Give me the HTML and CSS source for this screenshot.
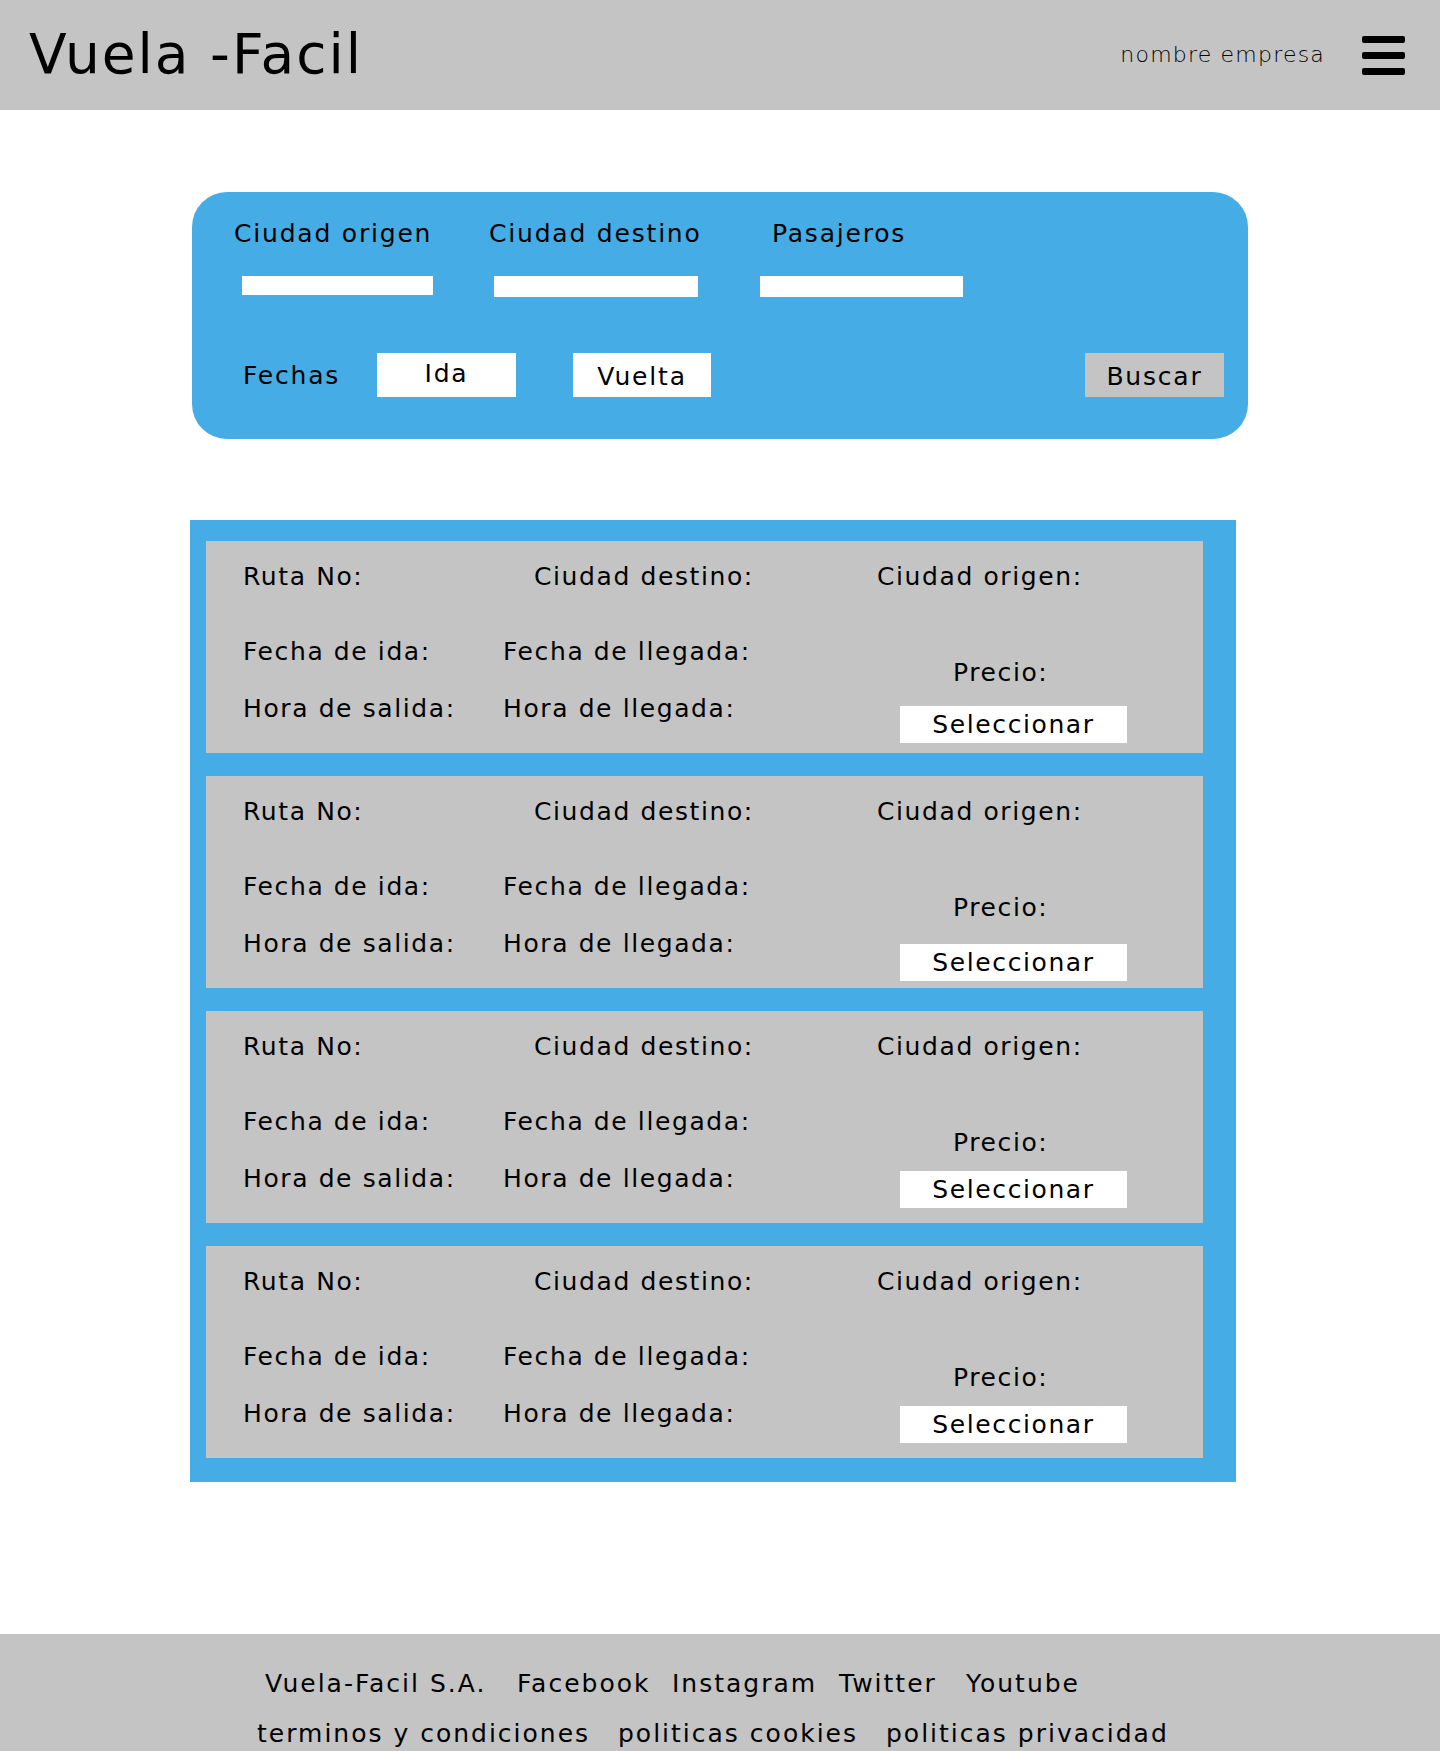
FILE: index.html
```html
<!DOCTYPE html>
<html lang="es">
<head>
<meta charset="utf-8">
<title>Vuela -Facil</title>
<link rel="stylesheet" href="styles.css">
</head>
<body>
<header class="topbar">
  <h1 class="brand">Vuela -Facil</h1>
  <div class="topbar-right">
    <span class="company">nombre empresa</span>
    <div class="burger" aria-label="menu"><span></span><span></span><span></span></div>
  </div>
</header>

<main>
  <section class="search">
    <div class="search-labels">
      <span class="lbl lbl-origen">Ciudad origen</span>
      <span class="lbl lbl-destino">Ciudad destino</span>
      <span class="lbl">Pasajeros</span>
    </div>
    <div class="search-inputs">
      <div class="field field-1"></div>
      <div class="field field-2"></div>
      <div class="field field-3"></div>
    </div>
    <div class="search-dates">
      <span class="dates-label">Fechas</span>
      <span class="date-box date-ida">Ida</span>
      <span class="date-box date-vuelta">Vuelta</span>
      <span class="date-box btn-buscar">Buscar</span>
    </div>
  </section>

  <section class="results">
    <article class="route">
      <div class="route-top">
        <span class="c1">Ruta No:</span>
        <span class="c2 indent">Ciudad destino:</span>
        <span class="c3">Ciudad origen:</span>
      </div>
      <div class="route-body">
        <div class="c1 stack"><span>Fecha de ida:</span><span>Hora de salida:</span></div>
        <div class="c2 stack"><span>Fecha de llegada:</span><span>Hora de llegada:</span></div>
        <div class="c3 price"><span class="price-label">Precio:</span><span class="select-btn">Seleccionar</span></div>
      </div>
    </article>
    <article class="route route-2">
      <div class="route-top">
        <span class="c1">Ruta No:</span>
        <span class="c2 indent">Ciudad destino:</span>
        <span class="c3">Ciudad origen:</span>
      </div>
      <div class="route-body">
        <div class="c1 stack"><span>Fecha de ida:</span><span>Hora de salida:</span></div>
        <div class="c2 stack"><span>Fecha de llegada:</span><span>Hora de llegada:</span></div>
        <div class="c3 price"><span class="price-label">Precio:</span><span class="select-btn">Seleccionar</span></div>
      </div>
    </article>
    <article class="route route-3">
      <div class="route-top">
        <span class="c1">Ruta No:</span>
        <span class="c2 indent">Ciudad destino:</span>
        <span class="c3">Ciudad origen:</span>
      </div>
      <div class="route-body">
        <div class="c1 stack"><span>Fecha de ida:</span><span>Hora de salida:</span></div>
        <div class="c2 stack"><span>Fecha de llegada:</span><span>Hora de llegada:</span></div>
        <div class="c3 price"><span class="price-label">Precio:</span><span class="select-btn">Seleccionar</span></div>
      </div>
    </article>
    <article class="route route-4">
      <div class="route-top">
        <span class="c1">Ruta No:</span>
        <span class="c2 indent">Ciudad destino:</span>
        <span class="c3">Ciudad origen:</span>
      </div>
      <div class="route-body">
        <div class="c1 stack"><span>Fecha de ida:</span><span>Hora de salida:</span></div>
        <div class="c2 stack"><span>Fecha de llegada:</span><span>Hora de llegada:</span></div>
        <div class="c3 price"><span class="price-label">Precio:</span><span class="select-btn">Seleccionar</span></div>
      </div>
    </article>
  </section>
</main>

<footer class="footer">
  <div class="footer-line footer-line-1">
    <span>Vuela-Facil S.A.</span>
    <span>Facebook</span>
    <span>Instagram</span>
    <span>Twitter</span>
    <span>Youtube</span>
  </div>
  <div class="footer-line footer-line-2">
    <span>terminos y condiciones</span>
    <span>politicas cookies</span>
    <span>politicas privacidad</span>
  </div>
</footer>
</body>
</html>
```

FILE: styles.css
```css
* { box-sizing: border-box; }

html, body {
  margin: 0;
  padding: 0;
  background: #ffffff;
  color: #000000;
  font-family: "DejaVu Sans", "Liberation Sans", sans-serif;
}

/* ---------- header ---------- */
.topbar {
  height: 110px;
  background: #c4c4c4;
  display: flex;
  justify-content: space-between;
  align-items: flex-start;
  padding: 0 35px 0 29px;
}

.brand {
  margin: 22px 0 0 0;
  font-size: 55px;
  line-height: 64px;
  font-weight: 400;
  letter-spacing: 2px;
  white-space: nowrap;
}

.topbar-right {
  display: flex;
  align-items: flex-start;
}

.company {
  margin-top: 42px;
  font-size: 22px;
  line-height: 26px;
  font-weight: 300;
  letter-spacing: 1.2px;
  color: #000000;
  white-space: nowrap;
}

.burger {
  margin: 36px 0 0 37px;
  width: 43px;
  display: flex;
  flex-direction: column;
  gap: 9px;
}

.burger span {
  display: block;
  height: 7px;
  border-radius: 2px;
  background: #000;
}

/* ---------- search card ---------- */
.search {
  width: 1056px;
  height: 247px;
  margin: 82px auto 0 auto;
  background: #45ace6;
  border-radius: 35px;
  padding-top: 27px;
  font-size: 25px;
  letter-spacing: 1.8px;
}

.search-labels {
  display: flex;
  padding-left: 42px;
  line-height: 30px;
  white-space: nowrap;
}

.lbl-origen { width: 255px; }
.lbl-destino { width: 283px; }

.search-inputs {
  display: flex;
  align-items: flex-start;
  margin-top: 27px;
  padding-left: 50px;
}

.field { background: #ffffff; }
.field-1 { width: 191px; height: 19px; }
.field-2 { width: 204px; height: 21px; margin-left: 61px; }
.field-3 { width: 203px; height: 21px; margin-left: 62px; }

.search-dates {
  display: flex;
  align-items: flex-start;
  margin-top: 56px;
  padding: 0 24px 0 51px;
}

.dates-label {
  width: 134px;
  margin-top: 8px;
  line-height: 30px;
}

.date-box {
  width: 139px;
  height: 44px;
  padding-top: 3px;
  line-height: 41px;
  text-align: center;
  background: #ffffff;
  white-space: nowrap;
}

.date-ida { padding-top: 0; }
.date-vuelta { width: 138px; margin-left: 57px; }

.btn-buscar {
  margin-left: auto;
  background: #c4c4c4;
}

/* ---------- results ---------- */
.results {
  width: 1046px;
  margin: 81px 0 0 190px;
  background: #45ace6;
  padding: 21px 33px 24px 16px;
  display: flex;
  flex-direction: column;
  gap: 23px;
}

.route {
  height: 212px;
  background: #c4c4c4;
  padding: 21px 0 0 37px;
  font-size: 25px;
  letter-spacing: 1.6px;
  line-height: 30px;
  white-space: nowrap;
}

.route-top,
.route-body {
  display: flex;
  align-items: flex-start;
}

.route-body { margin-top: 45px; }

.c1 { width: 260px; }
.c2 { width: 374px; }
.indent { padding-left: 31px; }

.stack {
  display: flex;
  flex-direction: column;
  gap: 27px;
}

.price {
  display: flex;
  flex-direction: column;
  align-items: flex-start;
  padding-top: 21px;
}

.price-label { margin-left: 76px; }

.select-btn {
  margin: 18px 0 0 23px;
  width: 227px;
  height: 37px;
  line-height: 37px;
  text-align: center;
  background: #ffffff;
}

.route-2 .select-btn { margin-top: 21px; }
.route-3 .select-btn,
.route-4 .select-btn { margin-top: 13px; }

/* ---------- footer ---------- */
.footer {
  margin-top: 152px;
  background: #c4c4c4;
  padding: 35px 0 2px 0;
  font-size: 25px;
  letter-spacing: 2px;
  line-height: 30px;
  white-space: nowrap;
}

.footer-line { display: grid; }
.footer-line-1 {
  padding-left: 265px;
  grid-template-columns: 252px 155px 167px 127px auto;
}
.footer-line-2 {
  padding-left: 257px;
  margin-top: 20px;
  grid-template-columns: 361px 268px auto;
}
```
